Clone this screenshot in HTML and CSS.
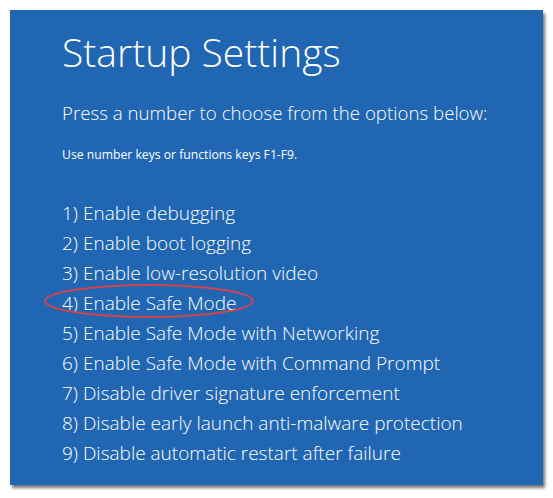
FILE: index.html
```html
<!DOCTYPE html>
<html>
<head>
<meta charset="utf-8">
<link rel="stylesheet" href="styles.css">
</head>
<body>
<div class="panel">
  <h1 class="title">Startup Settings</h1>
  <p class="lead">Press a number to choose from the options below:</p>
  <p class="hint">Use number keys or functions keys F1-F9.</p>
  <ol class="options">
    <li>1) Enable debugging</li>
    <li>2) Enable boot logging</li>
    <li>3) Enable low-resolution video</li>
    <li class="marked">4) Enable Safe Mode<svg class="ring" width="212" height="36" viewBox="0 0 212 36"><ellipse cx="106" cy="18" rx="104" ry="16" fill="none" stroke="#d2434c" stroke-width="2"/></svg></li>
    <li>5) Enable Safe Mode with Networking</li>
    <li>6) Enable Safe Mode with Command Prompt</li>
    <li>7) Disable driver signature enforcement</li>
    <li>8) Disable early launch anti-malware protection</li>
    <li>9) Disable automatic restart after failure</li>
  </ol>
</div>
</body>
</html>
```
FILE: styles.css
```css
html, body {
  margin: 0;
  padding: 0;
  background: #ffffff;
}
body {
  padding: 10px;
  font-family: "Open Sans", "Noto Sans", sans-serif;
  color: #ffffff;
}
.panel {
  width: 533px;
  height: 475px;
  box-sizing: border-box;
  background: #2166b3;
  padding: 18px 0 0 52px;
  box-shadow: 2px 3px 3px rgba(0, 0, 0, 0.55);
}
.title {
  margin: 0;
  font-weight: 300;
  font-size: 39px;
  line-height: 48px;
}
.lead {
  margin: 24px 0 0;
  font-weight: 300;
  font-size: 18.7px;
  line-height: 26px;
}
.hint {
  margin: 19.6px 0 0;
  font-weight: 400;
  font-size: 12.2px;
  line-height: 18px;
}
.options {
  list-style: none;
  margin: 34.3px 0 0;
  padding: 0;
}
.options li {
  font-weight: 300;
  font-size: 19px;
  line-height: 30px;
  position: relative;
}
.ring {
  position: absolute;
  left: -19px;
  top: -4.6px;
}
```
